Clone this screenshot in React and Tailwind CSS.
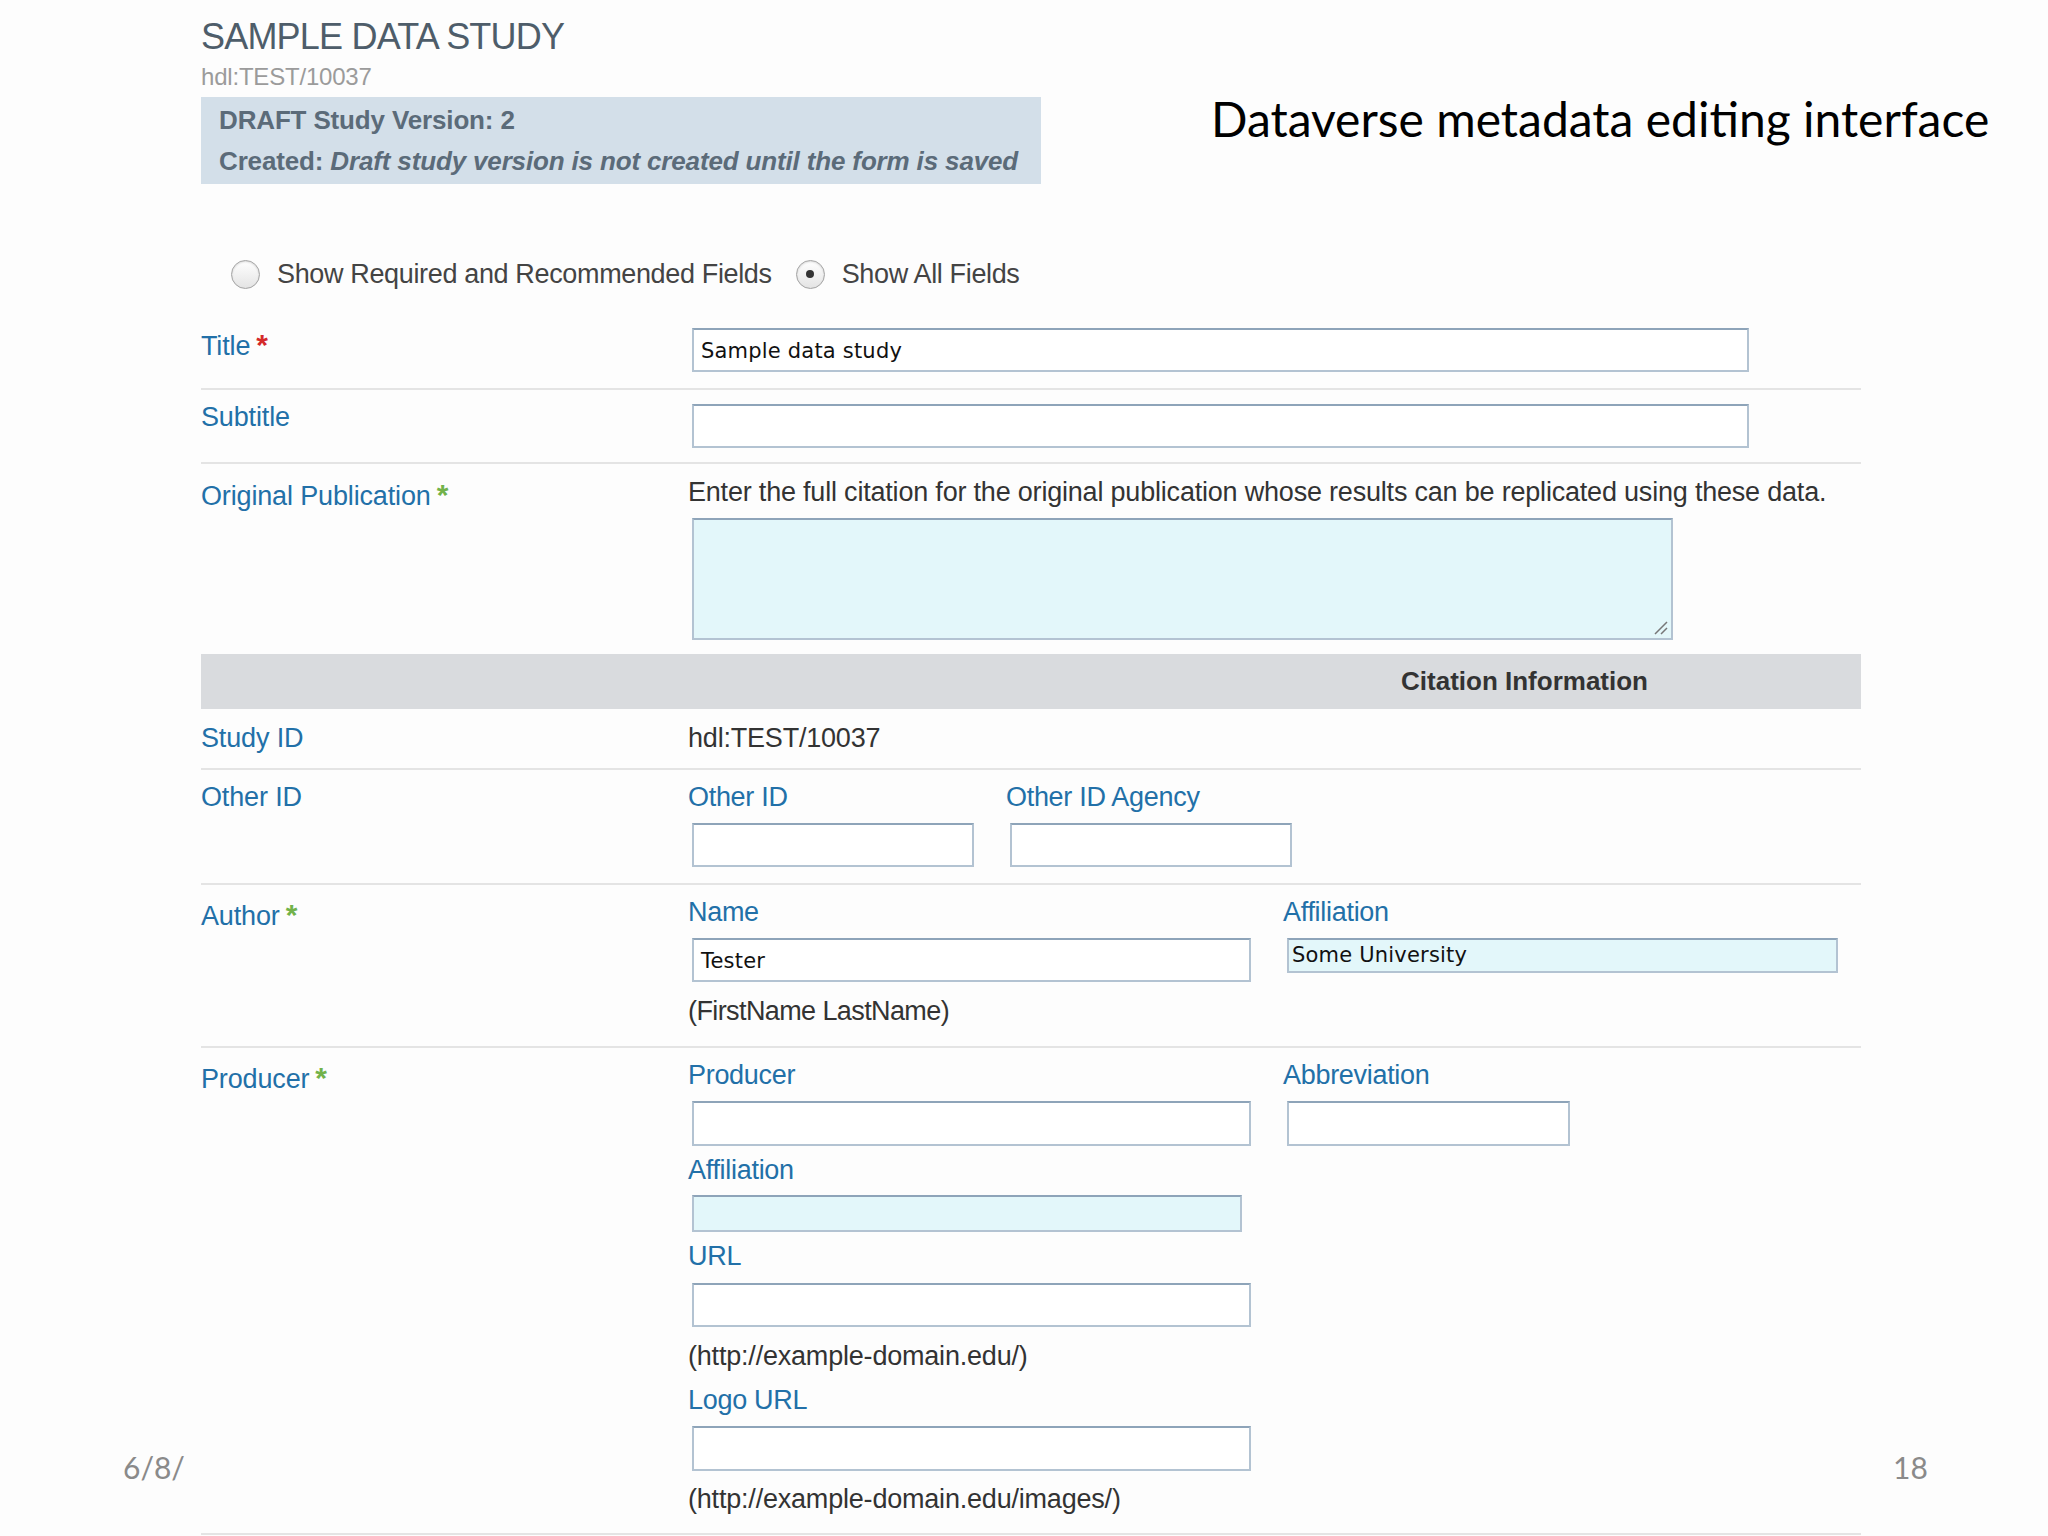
import React from "react";

const SANS = "font-['Liberation_Sans',Arial,sans-serif]";
const LUCIDA = "font-['DejaVu_Sans',Verdana,sans-serif]";

function Req({ color = "green" }) {
  return (
    <span
      className={`ml-[6px] align-top text-[30px] leading-none font-bold ${
        color === "red" ? "text-[#d42a2a]" : "text-[#72b24a]"
      }`}
    >
      *
    </span>
  );
}

function FieldLabel({ children, pt, req }) {
  return (
    <div
      className={`w-[487px] shrink-0 text-[27px] leading-[32px] tracking-[-0.15px] text-[#2270a8] ${pt}`}
    >
      {children}
      {req && <Req color={req} />}
    </div>
  );
}

function SubLabel({ children }) {
  return (
    <div className="text-[27px] leading-[32px] tracking-[-0.3px] text-[#2270a8]">
      {children}
    </div>
  );
}

function Hint({ children, className = "" }) {
  return (
    <div
      className={`whitespace-nowrap text-[27px] leading-[32px] tracking-[-0.2px] text-[#333] ${className}`}
    >
      {children}
    </div>
  );
}

function Box({ w, h, cyan, value, className = "" }) {
  return (
    <div
      className={`ml-[4px] flex items-center border-2 border-[#b3c3d2] border-t-[#8ea4b9] ${
        cyan ? "bg-[#e3f7fa]" : "bg-white"
      } ${w} ${h} ${className}`}
    >
      {value && (
        <span className={`${LUCIDA} pl-[7px] pt-[4px] text-[21px] tracking-[0.2px] text-[#111]`}>
          {value}
        </span>
      )}
    </div>
  );
}

function Radio({ checked }) {
  return (
    <div className="flex h-[29px] w-[29px] shrink-0 items-center justify-center rounded-full border border-[#a3a3a3] bg-gradient-to-b from-white to-[#e4e4e4] shadow-[inset_0_1px_2px_rgba(0,0,0,0.15)]">
      {checked && <div className="h-[8px] w-[8px] rounded-full bg-[#333]" />}
    </div>
  );
}

export default function App() {
  return (
    <div
      className={`${SANS} relative h-[1536px] w-[2048px] overflow-hidden bg-[#fdfdfd]`}
    >
      <div className="pl-[201px]">
        {/* header */}
        <div className="flex items-start">
          <div className="w-[840px] shrink-0 pt-[17px]">
            <h1 className="text-[36px] leading-[40px] tracking-[-0.8px] text-[#4e5d6a]">
              SAMPLE DATA STUDY
            </h1>
            <div className="mt-[6px] text-[24px] leading-[28px] tracking-[-0.2px] text-[#9b9b9b]">
              hdl:TEST/10037
            </div>
            <div className="mt-[6px] whitespace-nowrap bg-[#d3dfe9] pl-[18px] pt-[7px] pb-[7px] text-[26px] font-bold leading-[32px] tracking-[-0.15px] text-[#5b6b79]">
              <div>DRAFT Study Version: 2</div>
              <div className="mt-[9px]">
                Created: <i>Draft study version is not created until the form is saved</i>
              </div>
            </div>
          </div>
          <div className="ml-[170px] mt-[91px] whitespace-nowrap font-['Lato',sans-serif] text-[48px] leading-[56px] text-black">
            Dataverse metadata editing interface
          </div>
        </div>

        {/* radio row */}
        <div className="mt-[74px] mb-[20px] ml-[30px] flex h-[32px] items-center text-[27px] leading-[32px] tracking-[-0.35px] text-[#444]">
          <Radio />
          <span className="ml-[17px]">Show Required and Recommended Fields</span>
          <div className="ml-[24px]">
            <Radio checked />
          </div>
          <span className="ml-[17px]">Show All Fields</span>
        </div>

        {/* form */}
        <div className="w-[1660px]">
          {/* Title */}
          <div className="flex border-b-2 border-[#e4e4e4]">
            <FieldLabel pt="pt-[20px]" req="red">Title</FieldLabel>
            <div className="pt-[18px] pb-[16px]">
              <Box w="w-[1057px]" h="h-[44px]" value="Sample data study" />
            </div>
          </div>

          {/* Subtitle */}
          <div className="flex border-b-2 border-[#e4e4e4]">
            <FieldLabel pt="pt-[11px]">Subtitle</FieldLabel>
            <div className="pt-[14px] pb-[14px]">
              <Box w="w-[1057px]" h="h-[44px]" />
            </div>
          </div>

          {/* Original Publication */}
          <div className="flex">
            <FieldLabel pt="pt-[16px]" req="green">Original Publication</FieldLabel>
            <div className="pt-[12px] pb-[14px]">
              <Hint className="tracking-[-0.1px]">
                Enter the full citation for the original publication whose results can be replicated using these data.
              </Hint>
              <div className="relative mt-[10px] ml-[4px] h-[122px] w-[981px] border-2 border-[#b3c3d2] border-t-[#8ea4b9] bg-[#e3f7fa]">
                <svg
                  className="absolute right-[3px] bottom-[3px]"
                  width="16"
                  height="16"
                  viewBox="0 0 16 16"
                >
                  <path d="M15 3 L3 15 M15 9 L9 15" stroke="#777" strokeWidth="1.5" />
                </svg>
              </div>
            </div>
          </div>

          {/* Citation band */}
          <div className="flex h-[55px] items-center justify-end bg-[#d9dbde] pr-[213px]">
            <span className="text-[26px] font-bold tracking-[0px] text-[#333]">
              Citation Information
            </span>
          </div>

          {/* Study ID */}
          <div className="flex border-b-2 border-[#e4e4e4]">
            <FieldLabel pt="pt-[13px]">Study ID</FieldLabel>
            <div className="pt-[13px] pb-[14px]">
              <Hint>hdl:TEST/10037</Hint>
            </div>
          </div>

          {/* Other ID */}
          <div className="flex border-b-2 border-[#e4e4e4]">
            <FieldLabel pt="pt-[11px]">Other ID</FieldLabel>
            <div className="flex pt-[11px] pb-[16px]">
              <div className="w-[318px]">
                <SubLabel>Other ID</SubLabel>
                <Box w="w-[282px]" h="h-[44px]" className="mt-[10px]" />
              </div>
              <div>
                <SubLabel>Other ID Agency</SubLabel>
                <Box w="w-[282px]" h="h-[44px]" className="mt-[10px]" />
              </div>
            </div>
          </div>

          {/* Author */}
          <div className="flex border-b-2 border-[#e4e4e4]">
            <FieldLabel pt="pt-[15px]" req="green">Author</FieldLabel>
            <div className="flex pt-[11px] pb-[19px]">
              <div className="w-[595px]">
                <SubLabel>Name</SubLabel>
                <Box w="w-[559px]" h="h-[44px]" value="Tester" className="mt-[10px]" />
                <Hint className="mt-[13px] tracking-[-0.6px]">(FirstName LastName)</Hint>
              </div>
              <div>
                <SubLabel>Affiliation</SubLabel>
                <Box
                  w="w-[551px]"
                  h="h-[35px]"
                  cyan
                  value="Some University"
                  className="mt-[10px] [&>span]:pl-[3px] [&>span]:pt-[1px]"
                />
              </div>
            </div>
          </div>

          {/* Producer */}
          <div className="flex border-b-2 border-[#e4e4e4]">
            <FieldLabel pt="pt-[15px]" req="green">Producer</FieldLabel>
            <div className="flex pt-[11px] pb-[18px]">
              <div className="w-[595px]">
                <SubLabel>Producer</SubLabel>
                <Box w="w-[559px]" h="h-[45px]" className="mt-[10px]" />
                <div className="mt-[8px]">
                  <SubLabel>Affiliation</SubLabel>
                </div>
                <Box w="w-[550px]" h="h-[37px]" cyan className="mt-[9px]" />
                <div className="mt-[8px]">
                  <SubLabel>URL</SubLabel>
                </div>
                <Box w="w-[559px]" h="h-[44px]" className="mt-[11px]" />
                <Hint className="mt-[13px]">(http://example-domain.edu/)</Hint>
                <div className="mt-[12px]">
                  <SubLabel>Logo URL</SubLabel>
                </div>
                <Box w="w-[559px]" h="h-[45px]" className="mt-[10px]" />
                <Hint className="mt-[12px]">(http://example-domain.edu/images/)</Hint>
              </div>
              <div>
                <SubLabel>Abbreviation</SubLabel>
                <Box w="w-[283px]" h="h-[45px]" className="mt-[10px]" />
              </div>
            </div>
          </div>
        </div>
      </div>

      {/* slide footer */}
      <div className="absolute left-[123px] top-[1448px] font-['Lato',sans-serif] text-[30px] leading-[38px] text-[#8a8a8a]">
        6/8/
      </div>
      <div className="absolute left-[1893px] top-[1448px] font-['Lato',sans-serif] text-[30px] leading-[38px] text-[#8a8a8a]">
        18
      </div>
    </div>
  );
}
